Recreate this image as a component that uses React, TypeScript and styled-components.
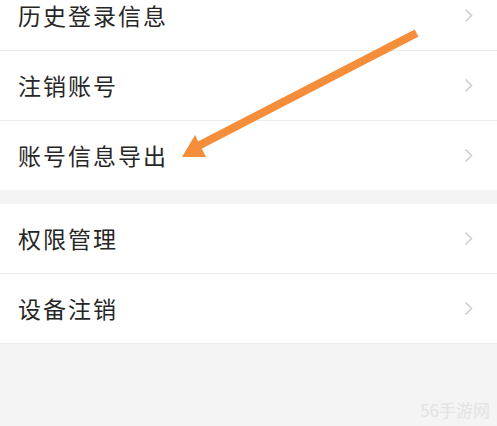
import React from "react";
import styled, { createGlobalStyle } from "styled-components";

const Global = createGlobalStyle`
  html, body { margin: 0; padding: 0; background: #f4f4f4; }
  body { width: 497px; height: 426px; overflow: hidden; }
`;

const Page = styled.div`
  position: relative;
  width: 497px;
  height: 426px;
  background: #f4f4f4;
  overflow: hidden;
  font-family: "Noto Sans CJK SC", "Noto Sans", sans-serif;
`;

const Screen = styled.div`
  display: flex;
  flex-direction: column;
  gap: 14px;
  margin-top: -19px;
`;

const Group = styled.div`
  display: flex;
  flex-direction: column;
  background: #fff;
`;

const Row = styled.div<{ $last?: boolean }>`
  display: flex;
  align-items: center;
  justify-content: space-between;
  height: 69px;
  padding: 0 24px 0 18px;
  border-bottom: ${(p) => (p.$last ? "none" : "1px solid #ebebeb")};
  box-sizing: content-box;
`;

const Label = styled.span`
  font-size: 23px;
  letter-spacing: 2px;
  color: #262626;
  font-weight: 400;
  line-height: 1;
`;

const Chevron = styled.svg`
  width: 9px;
  height: 15px;
  flex: none;
`;

const Arrow = styled.svg`
  position: absolute;
  left: 0;
  top: 0;
  width: 497px;
  height: 426px;
  pointer-events: none;
`;

const Watermark = styled.span`
  position: absolute;
  right: 7px;
  bottom: 4px;
  font-size: 17px;
  color: #e3e3e3;
`;

const ChevronIcon = () => (
  <Chevron viewBox="0 0 9 15">
    <path d="M1.5 1.5 L7.5 7.5 L1.5 13.5" fill="none" stroke="#cfcfcf" strokeWidth="1.6" />
  </Chevron>
);

const groups = [
  ["历史登录信息", "注销账号", "账号信息导出"],
  ["权限管理", "设备注销"],
];

export default function App() {
  return (
    <Page>
      <Global />
      <Screen>
        {groups.map((g, gi) => (
          <Group key={gi}>
            {g.map((label, i) => (
              <Row key={label} $last={gi === 0 && i === g.length - 1}>
                <Label>{label}</Label>
                <ChevronIcon />
              </Row>
            ))}
          </Group>
        ))}
      </Screen>
      <Arrow viewBox="0 0 497 426">
        <line x1="413" y1="35" x2="198" y2="146" stroke="#f58e3a" strokeWidth="8" strokeLinecap="square" />
        <polygon points="182,157 195,135 206,157" fill="#f58e3a" />
      </Arrow>
      <Watermark>56手游网</Watermark>
    </Page>
  );
}
